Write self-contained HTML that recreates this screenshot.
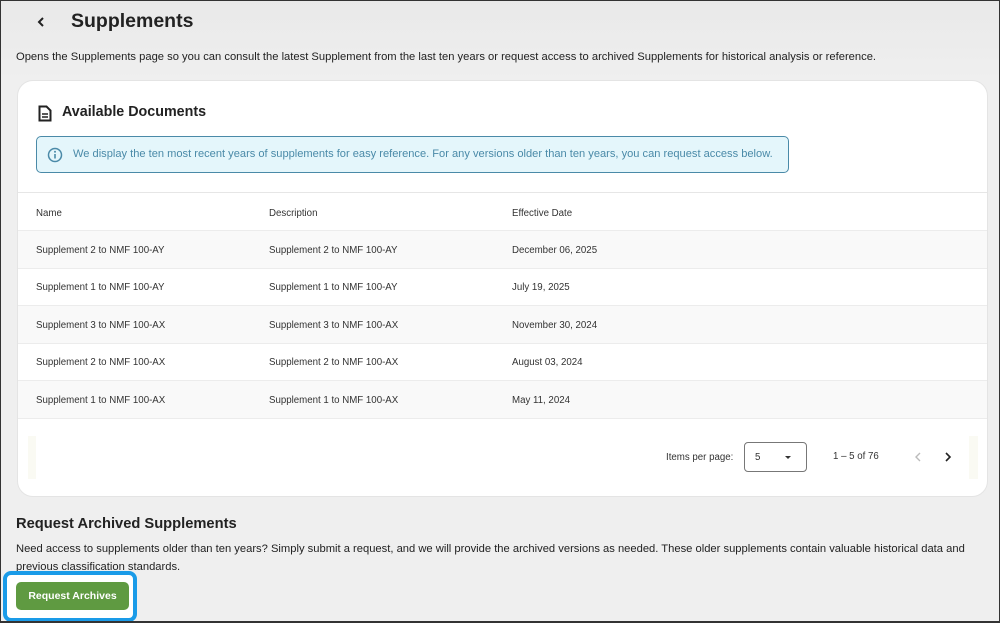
<!DOCTYPE html>
<html><head><style>
*{box-sizing:border-box;margin:0;padding:0}
body{width:1000px;height:623px;overflow:hidden;font-family:"Liberation Sans",sans-serif;background:#efefef;position:relative;color:#222}
.frame{position:absolute;inset:0;background:linear-gradient(#e9e9e9,#efefef 80px);}
.bord{position:absolute;inset:0;border:1px solid #333;border-bottom:2px solid #333}
.abs{position:absolute}
.card{position:absolute;left:17px;top:80px;width:971px;height:417px;background:#fff;border-radius:16px;border:1px solid #e4e4e4;overflow:hidden}
.row{position:absolute;left:0;width:100%;height:38px;font-size:9.7px;color:#333;border-bottom:1px solid #ececec}
.row span{position:absolute;top:14px}
.alt{background:#f9f9f9}
</style></head><body><div class="frame">
<svg class="abs" style="left:35px;top:15px" width="12" height="14" viewBox="0 0 12 14"><path d="M8 3 L4 7 L8 11" stroke="#222" stroke-width="2" fill="none"/></svg>
<div class="abs" style="left:71px;top:10px;font-size:19.5px;font-weight:bold;color:#222">Supplements</div>
<div class="abs" style="left:16px;top:51px;font-size:11.2px;color:#222;white-space:nowrap">Opens the Supplements page so you can consult the latest Supplement from the last ten years or request access to archived Supplements for historical analysis or reference.</div>
<div class="card">
<svg class="abs" style="left:20px;top:24px" width="14" height="17" viewBox="0 0 14 17"><path d="M1.5 1.5h7l4 4v10h-11z" stroke="#222" stroke-width="2" fill="none"/><path d="M4 9h6M4 12h6" stroke="#222" stroke-width="1.5"/></svg>
<div class="abs" style="left:44px;top:23px;font-size:14.3px;font-weight:bold;color:#222">Available Documents</div>
<div class="abs" style="left:18px;top:55px;width:753px;height:37px;background:#e4f6fb;border:1px solid #4a8aa8;border-radius:5px"></div>
<svg class="abs" style="left:29px;top:66px" width="16" height="16" viewBox="0 0 16 16"><circle cx="8" cy="8" r="6.5" stroke="#4a8aa8" stroke-width="1.5" fill="none"/><path d="M8 7v4.5" stroke="#4a8aa8" stroke-width="1.6"/><circle cx="8" cy="4.8" r="1" fill="#4a8aa8"/></svg>
<div class="abs" style="left:55px;top:67px;font-size:11.1px;color:#4a8aa8;white-space:nowrap">We display the ten most recent years of supplements for easy reference. For any versions older than ten years, you can request access below.</div>
<div class="row" style="top:111px;border-top:1px solid #e6e6e6;height:39px"><span style="left:18px;top:15px">Name</span><span style="left:251px;top:15px">Description</span><span style="left:494px;top:15px">Effective Date</span></div>
<div class="row alt" style="top:150px"><span style="left:18px">Supplement 2 to NMF 100-AY</span><span style="left:251px">Supplement 2 to NMF 100-AY</span><span style="left:494px">December 06, 2025</span></div>
<div class="row" style="top:187px"><span style="left:18px">Supplement 1 to NMF 100-AY</span><span style="left:251px">Supplement 1 to NMF 100-AY</span><span style="left:494px">July 19, 2025</span></div>
<div class="row alt" style="top:225px"><span style="left:18px">Supplement 3 to NMF 100-AX</span><span style="left:251px">Supplement 3 to NMF 100-AX</span><span style="left:494px">November 30, 2024</span></div>
<div class="row" style="top:262px"><span style="left:18px">Supplement 2 to NMF 100-AX</span><span style="left:251px">Supplement 2 to NMF 100-AX</span><span style="left:494px">August 03, 2024</span></div>
<div class="row alt" style="top:300px"><span style="left:18px">Supplement 1 to NMF 100-AX</span><span style="left:251px">Supplement 1 to NMF 100-AX</span><span style="left:494px">May 11, 2024</span></div>
<div class="abs" style="left:10px;top:355px;width:8px;height:43px;background:#fafaf3"></div>
<div class="abs" style="left:951px;top:355px;width:9px;height:43px;background:#fafaf3"></div>
<div class="abs" style="left:648px;top:371px;font-size:9.7px;color:#333">Items per page:</div>
<div class="abs" style="left:726px;top:361px;width:63px;height:30px;border:1px solid #777;border-radius:4px"></div>
<div class="abs" style="left:737px;top:371px;font-size:9.7px;color:#333">5</div>
<div class="abs" style="left:767px;top:375px;width:0;height:0;border-left:3px solid transparent;border-right:3px solid transparent;border-top:3px solid #333"></div>
<div class="abs" style="left:815px;top:370px;font-size:9.7px;color:#333">1 – 5 of 76</div>
<svg class="abs" style="left:895px;top:370px" width="10" height="12" viewBox="0 0 10 12"><path d="M7 2 L3 6 L7 10" stroke="#bbb" stroke-width="1.4" fill="none"/></svg>
<svg class="abs" style="left:925px;top:370px" width="10" height="12" viewBox="0 0 10 12"><path d="M3 2 L7 6 L3 10" stroke="#222" stroke-width="1.6" fill="none"/></svg>
</div>
<div class="abs" style="left:16px;top:516px;font-size:14.7px;font-weight:bold;color:#222">Request Archived Supplements</div>
<div class="abs" style="left:16px;top:540px;width:975px;font-size:11.2px;line-height:18px;color:#222">Need access to supplements older than ten years? Simply submit a request, and we will provide the archived versions as needed. These older supplements contain valuable historical data and previous classification standards.</div>
<div class="abs" style="left:3px;top:571px;width:134px;height:51px;border:4px solid #1a9be8;border-radius:8px;background:#fff"></div>
<div class="abs" style="left:16px;top:582px;width:113px;height:28px;background:#5f9a41;border-radius:5px;color:#fff;font-size:10.5px;font-weight:bold;text-align:center;line-height:28px">Request Archives</div>
</div><div class="bord"></div></body></html>
